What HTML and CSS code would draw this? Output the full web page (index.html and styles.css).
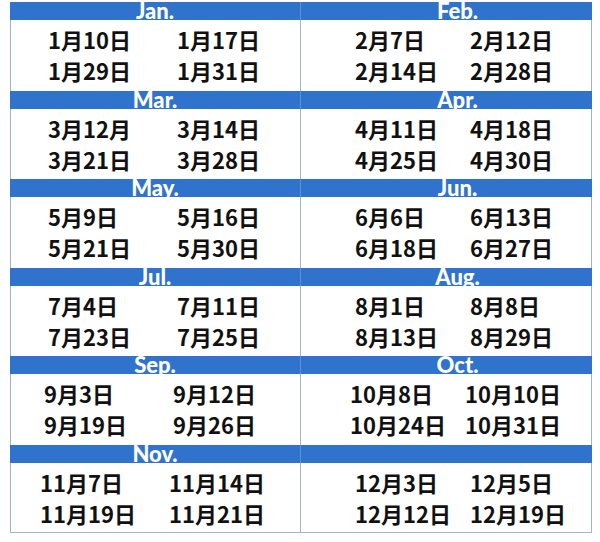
FILE: index.html
```html
<!DOCTYPE html>
<html lang="zh">
<head>
<meta charset="utf-8">
<link rel="stylesheet" href="styles.css">
</head>
<body>
<div class="cal">
  <div class="row">
    <div class="half left"><div class="hd">Jan.</div><div class="bd"><span>1月10日</span><span>1月17日</span><span>1月29日</span><span>1月31日</span></div></div>
    <div class="half right"><div class="hd">Feb.</div><div class="bd"><span>2月7日</span><span>2月12日</span><span>2月14日</span><span>2月28日</span></div></div>
  </div>
  <div class="row">
    <div class="half left"><div class="hd">Mar.</div><div class="bd"><span>3月12月</span><span>3月14日</span><span>3月21日</span><span>3月28日</span></div></div>
    <div class="half right"><div class="hd">Apr.</div><div class="bd"><span>4月11日</span><span>4月18日</span><span>4月25日</span><span>4月30日</span></div></div>
  </div>
  <div class="row">
    <div class="half left"><div class="hd">May.</div><div class="bd"><span>5月9日</span><span>5月16日</span><span>5月21日</span><span>5月30日</span></div></div>
    <div class="half right"><div class="hd">Jun.</div><div class="bd"><span>6月6日</span><span>6月13日</span><span>6月18日</span><span>6月27日</span></div></div>
  </div>
  <div class="row">
    <div class="half left"><div class="hd">Jul.</div><div class="bd"><span>7月4日</span><span>7月11日</span><span>7月23日</span><span>7月25日</span></div></div>
    <div class="half right"><div class="hd">Aug.</div><div class="bd"><span>8月1日</span><span>8月8日</span><span>8月13日</span><span>8月29日</span></div></div>
  </div>
  <div class="row">
    <div class="half left"><div class="hd">Sep.</div><div class="bd shift-l"><span>9月3日</span><span>9月12日</span><span>9月19日</span><span>9月26日</span></div></div>
    <div class="half right"><div class="hd">Oct.</div><div class="bd shift-r"><span>10月8日</span><span>10月10日</span><span>10月24日</span><span>10月31日</span></div></div>
  </div>
  <div class="row last">
    <div class="half left"><div class="hd">Nov.</div><div class="bd shift-l2"><span>11月7日</span><span>11月14日</span><span>11月19日</span><span>11月21日</span></div></div>
    <div class="half right"><div class="hd"></div><div class="bd"><span>12月3日</span><span>12月5日</span><span>12月12日</span><span>12月19日</span></div></div>
  </div>
</div>
</body>
</html>
```

FILE: styles.css
```css
html, body {
  margin: 0;
  padding: 0;
  background: #ffffff;
}

.cal {
  width: 582px;
  margin: 2px 0 0 10px;
  display: flex;
  flex-direction: column;
}

.row {
  display: grid;
  grid-template-columns: 290px 292px;
}

.hd {
  height: 18px;
  background: #2f73cd;
  color: #ffffff;
  font-family: Lato, "Open Sans", "Liberation Sans", sans-serif;
  font-weight: 900;
  font-size: 22px;
  line-height: 18px;
  text-align: center;
}

.right .hd {
  padding-left: 22px;
  border-left: 1px solid #5d8fd6;
}

.bd {
  height: 70.5px;
  box-sizing: border-box;
  background: #ffffff;
  display: grid;
  align-content: start;
  padding-top: 4px;
  font-family: "Noto Sans CJK SC", "Noto Sans", sans-serif;
  font-weight: 700;
  font-size: 22px;
  line-height: 31px;
  color: #111111;
  white-space: nowrap;
}

.left .bd {
  border-left: 1px solid #9fb4d2;
  grid-template-columns: 129px 1fr;
  padding-left: 37px;
}

.right .bd {
  border-left: 1px solid #9fb4d2;
  border-right: 1px solid #9fb4d2;
  grid-template-columns: 115px 1fr;
  padding-left: 54px;
}

.left .bd.shift-l {
  padding-left: 33px;
}

.left .bd.shift-l2 {
  padding-left: 29px;
}

.right .bd.shift-r {
  padding-left: 49px;
}

.last .bd {
  border-bottom: 1px solid #9fb4d2;
}
```
